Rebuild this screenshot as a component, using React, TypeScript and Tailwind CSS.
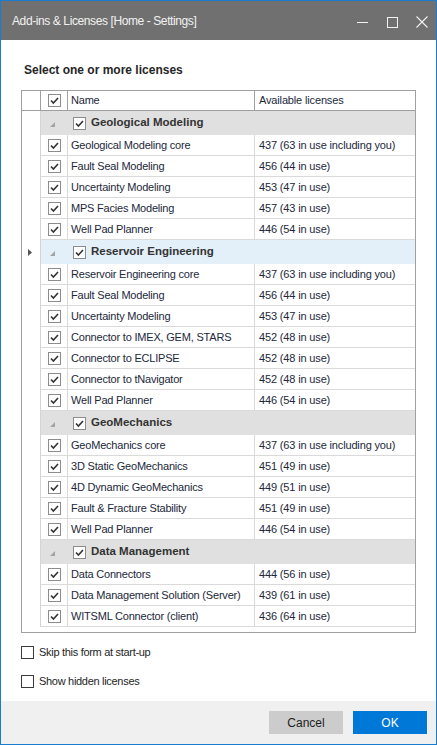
import React from "react";

type Group = { name: string; selected?: boolean; items: [string, string][] };

const groups: Group[] = [
  {
    name: "Geological Modeling",
    items: [
      ["Geological Modeling core", "437 (63 in use including you)"],
      ["Fault Seal Modeling", "456 (44 in use)"],
      ["Uncertainty Modeling", "453 (47 in use)"],
      ["MPS Facies Modeling", "457 (43 in use)"],
      ["Well Pad Planner", "446 (54 in use)"],
    ],
  },
  {
    name: "Reservoir Engineering",
    selected: true,
    items: [
      ["Reservoir Engineering core", "437 (63 in use including you)"],
      ["Fault Seal Modeling", "456 (44 in use)"],
      ["Uncertainty Modeling", "453 (47 in use)"],
      ["Connector to IMEX, GEM, STARS", "452 (48 in use)"],
      ["Connector to ECLIPSE", "452 (48 in use)"],
      ["Connector to tNavigator", "452 (48 in use)"],
      ["Well Pad Planner", "446 (54 in use)"],
    ],
  },
  {
    name: "GeoMechanics",
    items: [
      ["GeoMechanics core", "437 (63 in use including you)"],
      ["3D Static GeoMechanics", "451 (49 in use)"],
      ["4D Dynamic GeoMechanics", "449 (51 in use)"],
      ["Fault & Fracture Stability", "451 (49 in use)"],
      ["Well Pad Planner", "446 (54 in use)"],
    ],
  },
  {
    name: "Data Management",
    items: [
      ["Data Connectors", "444 (56 in use)"],
      ["Data Management Solution (Server)", "439 (61 in use)"],
      ["WITSML Connector (client)", "436 (64 in use)"],
    ],
  },
];

function Check({ checked = true, dark = false }: { checked?: boolean; dark?: boolean }) {
  return (
    <span
      className={
        "relative flex h-[13px] w-[13px] shrink-0 items-center justify-center bg-white border " +
        (dark ? "border-[#3c3c3c]" : "border-[#8c8c8c]")
      }
    >
      {checked && (
        <svg width="11" height="11" viewBox="0 0 11 11" className="block">
          <path d="M2 5.5 L4.4 8 L9 3" fill="none" stroke="#333" strokeWidth="1.6" />
        </svg>
      )}
    </span>
  );
}

function ItemRow({ name, avail }: { name: string; avail: string }) {
  return (
    <div className="flex h-[21px] shrink-0">
      <div className="w-[19px] shrink-0 border-r border-[#d4d4d4]" />
      <div className="flex flex-1 border-b border-[#dadada]">
        <div className="flex w-[27px] shrink-0 items-center justify-center border-r border-[#dadada]">
          <Check />
        </div>
        <div className="flex w-[187px] shrink-0 items-center border-r border-[#dadada] pl-[3px] text-[11px] tracking-[-0.2px] text-[#22283a] whitespace-nowrap">
          {name}
        </div>
        <div className="flex flex-1 items-center pl-[4px] text-[11px] tracking-[-0.15px] text-[#22283a] whitespace-nowrap">
          {avail}
        </div>
      </div>
    </div>
  );
}

function GroupRow({ name, selected }: { name: string; selected?: boolean }) {
  return (
    <div className="flex h-[24px] shrink-0">
      <div className="flex w-[19px] shrink-0 items-center justify-center border-r border-[#d4d4d4]">
        {selected && (
          <svg width="4" height="7" viewBox="0 0 4 7" className="block ml-[-2px]">
            <path d="M0 0 L4 3.5 L0 7 Z" fill="#555" />
          </svg>
        )}
      </div>
      <div
        className={
          "flex flex-1 items-center pl-[9px] " + (selected ? "bg-[#e3eff9]" : "bg-[#e0e0e0]")
        }
      >
        <svg width="5" height="5" viewBox="0 0 5 5" className="block mt-[2px]">
          <path d="M5 0 L5 5 L0 5 Z" fill="#a3a3a3" />
        </svg>
        <div className="ml-[18px]">
          <Check />
        </div>
        <span className="ml-[5px] text-[11.5px] font-bold text-[#333] whitespace-nowrap">{name}</span>
      </div>
    </div>
  );
}

export default function App() {
  return (
    <div className="flex h-[745px] w-[437px] flex-col border border-[#1a7ccf] bg-white font-['Liberation_Sans',Arial,sans-serif]">
      {/* Title bar */}
      <div className="flex h-[39px] shrink-0 items-center bg-[#707070]">
        <span className="pl-[11px] text-[12px] tracking-[-0.4px] text-[#f2f2f2] whitespace-nowrap">
          Add-ins &amp; Licenses [Home - Settings]
        </span>
        <div className="ml-auto flex h-full items-center">
          <div className="flex h-full w-[30px] items-center justify-center">
            <svg width="11" height="11" viewBox="0 0 11 11" className="block mt-[3px]">
              <line x1="0" y1="5.5" x2="11" y2="5.5" stroke="#f2f2f2" strokeWidth="1" />
            </svg>
          </div>
          <div className="flex h-full w-[30px] items-center justify-center">
            <svg width="11" height="11" viewBox="0 0 11 11" className="block mt-[3px]">
              <rect x="0.5" y="0.5" width="10" height="10" fill="none" stroke="#f2f2f2" strokeWidth="1" />
            </svg>
          </div>
          <div className="flex h-full w-[29px] items-center justify-center">
            <svg width="12" height="12" viewBox="0 0 12 12" className="block mt-[3px]">
              <path d="M0.5 0.5 L11.5 11.5 M11.5 0.5 L0.5 11.5" stroke="#f2f2f2" strokeWidth="1.1" />
            </svg>
          </div>
        </div>
      </div>

      {/* Content */}
      <div className="flex flex-1 flex-col px-[20px]">
        <div className="pt-[23px] pl-[3px] text-[12px] font-bold leading-[14px] text-[#262626]">
          Select one or more licenses
        </div>

        <div className="mt-[13px] flex h-[543px] flex-col overflow-hidden border border-[#a0a0a0]">
          {/* Header */}
          <div className="flex h-[20px] shrink-0 border-b border-[#a0a0a0]">
            <div className="w-[19px] shrink-0 border-r border-[#a0a0a0]" />
            <div className="flex w-[27px] shrink-0 items-center justify-center border-r border-[#a0a0a0]">
              <Check />
            </div>
            <div className="flex w-[187px] shrink-0 items-center border-r border-[#a0a0a0] pl-[3px] text-[11px] tracking-[-0.2px] text-[#22283a]">
              Name
            </div>
            <div className="flex flex-1 items-center pl-[4px] text-[11px] tracking-[-0.15px] text-[#22283a]">
              Available licenses
            </div>
          </div>
          {groups.map((g) => (
            <React.Fragment key={g.name}>
              <GroupRow name={g.name} selected={g.selected} />
              {g.items.map(([n, a], i) => (
                <ItemRow key={g.name + i} name={n} avail={a} />
              ))}
            </React.Fragment>
          ))}
        </div>

        <label className="mt-[13px] flex h-[13px] items-center">
          <Check checked={false} dark />
          <span className="ml-[5px] text-[11px] leading-[13px] tracking-[-0.3px] text-[#1e1e1e]">
            Skip this form at start-up
          </span>
        </label>
        <label className="mt-[16px] flex h-[13px] items-center">
          <Check checked={false} dark />
          <span className="ml-[5px] text-[11px] leading-[13px] tracking-[-0.3px] text-[#1e1e1e]">
            Show hidden licenses
          </span>
        </label>
      </div>

      {/* Footer */}
      <div className="flex h-[43px] shrink-0 items-center justify-end gap-[10px] bg-[#f0f0f0] pr-[9px]">
        <button className="h-[23px] w-[74px] bg-[#cccccc] text-[12px] text-[#1e1e1e]">Cancel</button>
        <button className="h-[23px] w-[74px] bg-[#0078d7] text-[12px] text-white">OK</button>
      </div>
    </div>
  );
}
